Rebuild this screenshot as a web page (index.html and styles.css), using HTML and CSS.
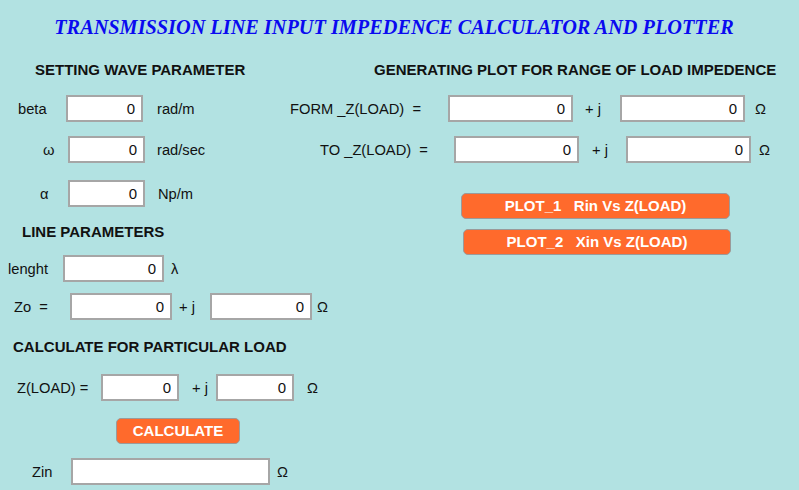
FILE: index.html
```html
<!DOCTYPE html>
<html lang="en">
<head>
<meta charset="utf-8">
<title>Transmission Line Input Impedence Calculator</title>
<link rel="stylesheet" href="styles.css">
</head>
<body>
<h1 class="title">TRANSMISSION LINE INPUT IMPEDENCE CALCULATOR AND PLOTTER</h1>
<div class="main">
  <div class="left">
    <div class="sec sec-wave">SETTING WAVE PARAMETER</div>
    <div class="row r-beta">
      <span class="lbl">beta</span>
      <input class="field" type="text" value="0">
      <span class="unit">rad/m</span>
    </div>
    <div class="row r-omega">
      <span class="lbl">ω</span>
      <input class="field" type="text" value="0">
      <span class="unit">rad/sec</span>
    </div>
    <div class="row r-alpha">
      <span class="lbl">α</span>
      <input class="field" type="text" value="0">
      <span class="unit">Np/m</span>
    </div>
    <div class="sec sec-line">LINE PARAMETERS</div>
    <div class="row r-len">
      <span class="lbl">lenght</span>
      <input class="field" type="text" value="0">
      <span class="unit">λ</span>
    </div>
    <div class="row r-zo">
      <span class="lbl">Zo&nbsp; =</span>
      <input class="field" type="text" value="0">
      <span class="pj">+ j</span>
      <input class="field" type="text" value="0">
      <span class="unit">Ω</span>
    </div>
    <div class="sec sec-calc">CALCULATE FOR PARTICULAR LOAD</div>
    <div class="row r-zl">
      <span class="lbl">Z(LOAD) =</span>
      <input class="field" type="text" value="0">
      <span class="pj">+ j</span>
      <input class="field" type="text" value="0">
      <span class="unit">Ω</span>
    </div>
    <button class="btn btn-calc" type="button">CALCULATE</button>
    <div class="row r-zin">
      <span class="lbl">Zin</span>
      <input class="field" type="text" value="">
      <span class="unit">Ω</span>
    </div>
  </div>
  <div class="right">
    <div class="sec sec-gen">GENERATING PLOT FOR RANGE OF LOAD IMPEDENCE</div>
    <div class="row r-form">
      <span class="lbl">FORM _Z(LOAD)&nbsp; =</span>
      <input class="field" type="text" value="0">
      <span class="pj">+ j</span>
      <input class="field" type="text" value="0">
      <span class="unit">Ω</span>
    </div>
    <div class="row r-to">
      <span class="lbl">TO _Z(LOAD)&nbsp; =</span>
      <input class="field" type="text" value="0">
      <span class="pj">+ j</span>
      <input class="field" type="text" value="0">
      <span class="unit">Ω</span>
    </div>
    <button class="btn btn-p1" type="button">PLOT_1&nbsp;&nbsp; Rin Vs Z(LOAD)</button>
    <button class="btn btn-p2" type="button">PLOT_2&nbsp;&nbsp; Xin Vs Z(LOAD)</button>
  </div>
</div>
</body>
</html>
```
FILE: styles.css
```css
html, body {
  margin: 0;
  padding: 0;
}
body {
  background: #b2e2e2;
  font-family: "Liberation Sans", Arial, sans-serif;
  font-size: 14.7px;
  color: #111;
  width: 799px;
  height: 490px;
  overflow: hidden;
}
.title {
  margin: 0;
  padding: 15px 11px 0 0;
  text-align: center;
  font-family: "Liberation Serif", "Times New Roman", serif;
  font-style: italic;
  font-weight: bold;
  font-size: 20.3px;
  line-height: 24px;
  color: #0a0af0;
  white-space: nowrap;
}
.main {
  display: flex;
  margin-top: 22px;
}
.left {
  flex: none;
  width: 280px;
  display: flex;
  flex-direction: column;
  align-items: flex-start;
}
.right {
  flex: 1;
  display: flex;
  flex-direction: column;
  align-items: flex-start;
}
.sec {
  font-weight: bold;
  font-size: 15px;
  line-height: 18px;
  color: #111;
  white-space: nowrap;
}
.sec-wave { padding-left: 35px; }
.sec-line { padding-left: 22px; margin-top: 16px; }
.sec-calc { padding-left: 13px; margin-top: 18px; }
.sec-gen { padding-left: 94px; }

.row {
  display: flex;
  align-items: center;
  height: 27px;
}
.lbl {
  flex: none;
  white-space: nowrap;
}
.unit, .pj {
  flex: none;
  white-space: nowrap;
}
.field {
  box-sizing: border-box;
  height: 27px;
  margin: 0;
  border: 2px solid #a6a6a6;
  background: #fff;
  padding: 0 6px 1px 4px;
  font-family: "Liberation Sans", Arial, sans-serif;
  font-size: 15px;
  color: #111;
  text-align: right;
  outline: none;
}

/* left column rows */
.r-beta { margin-top: 16px; padding-left: 18px; }
.r-beta .lbl { width: 48px; }
.r-beta .field { width: 77px; }
.r-beta .unit { margin-left: 14px; }

.r-omega { margin-top: 14px; padding-left: 43px; }
.r-omega .lbl { width: 25px; }
.r-omega .field { width: 77px; }
.r-omega .unit { margin-left: 12px; }

.r-alpha { margin-top: 17px; padding-left: 40px; }
.r-alpha .lbl { width: 28px; }
.r-alpha .field { width: 77px; }
.r-alpha .unit { margin-left: 13px; }

.r-len { margin-top: 14px; padding-left: 8px; }
.r-len .lbl { width: 55px; }
.r-len .field { width: 101px; }
.r-len .unit { margin-left: 7px; }

.r-zo { margin-top: 11px; padding-left: 14px; }
.r-zo .lbl { width: 56px; }
.r-zo .field { width: 102px; }
.r-zo .pj { margin-left: 7px; width: 31px; }
.r-zo .unit { margin-left: 5px; }

.r-zl { margin-top: 18px; padding-left: 17px; }
.r-zl .lbl { width: 84px; }
.r-zl .field { width: 78px; }
.r-zl .pj { margin-left: 13px; width: 24px; }
.r-zl .unit { margin-left: 13px; }

.r-zin { margin-top: 14px; padding-left: 32px; }
.r-zin .lbl { width: 39px; }
.r-zin .field { width: 199px; }
.r-zin .unit { margin-left: 7px; }

/* right column rows */
.r-form { margin-top: 16px; padding-left: 10px; }
.r-form .lbl { width: 158px; }
.r-form .field { width: 125px; }
.r-form .pj { margin-left: 12px; width: 35px; }
.r-form .unit { margin-left: 10px; }

.r-to { margin-top: 14px; padding-left: 40px; }
.r-to .lbl { width: 134px; }
.r-to .field { width: 125px; }
.r-to .pj { margin-left: 13px; width: 34px; }
.r-to .unit { margin-left: 8px; }

/* buttons */
.btn {
  box-sizing: border-box;
  height: 26px;
  padding: 0;
  border: 1px solid #9a9a9a;
  border-radius: 5px;
  background: #ff6a2c;
  color: #fff;
  font-family: "Liberation Sans", Arial, sans-serif;
  font-weight: bold;
  font-size: 15px;
  line-height: 24px;
  text-align: center;
  white-space: nowrap;
  cursor: pointer;
}
.btn-calc { margin: 17px 0 0 116px; width: 124px; }
.btn-p1 { margin: 30px 0 0 181px; width: 269px; }
.btn-p2 { margin: 10px 0 0 183px; width: 268px; }
```
